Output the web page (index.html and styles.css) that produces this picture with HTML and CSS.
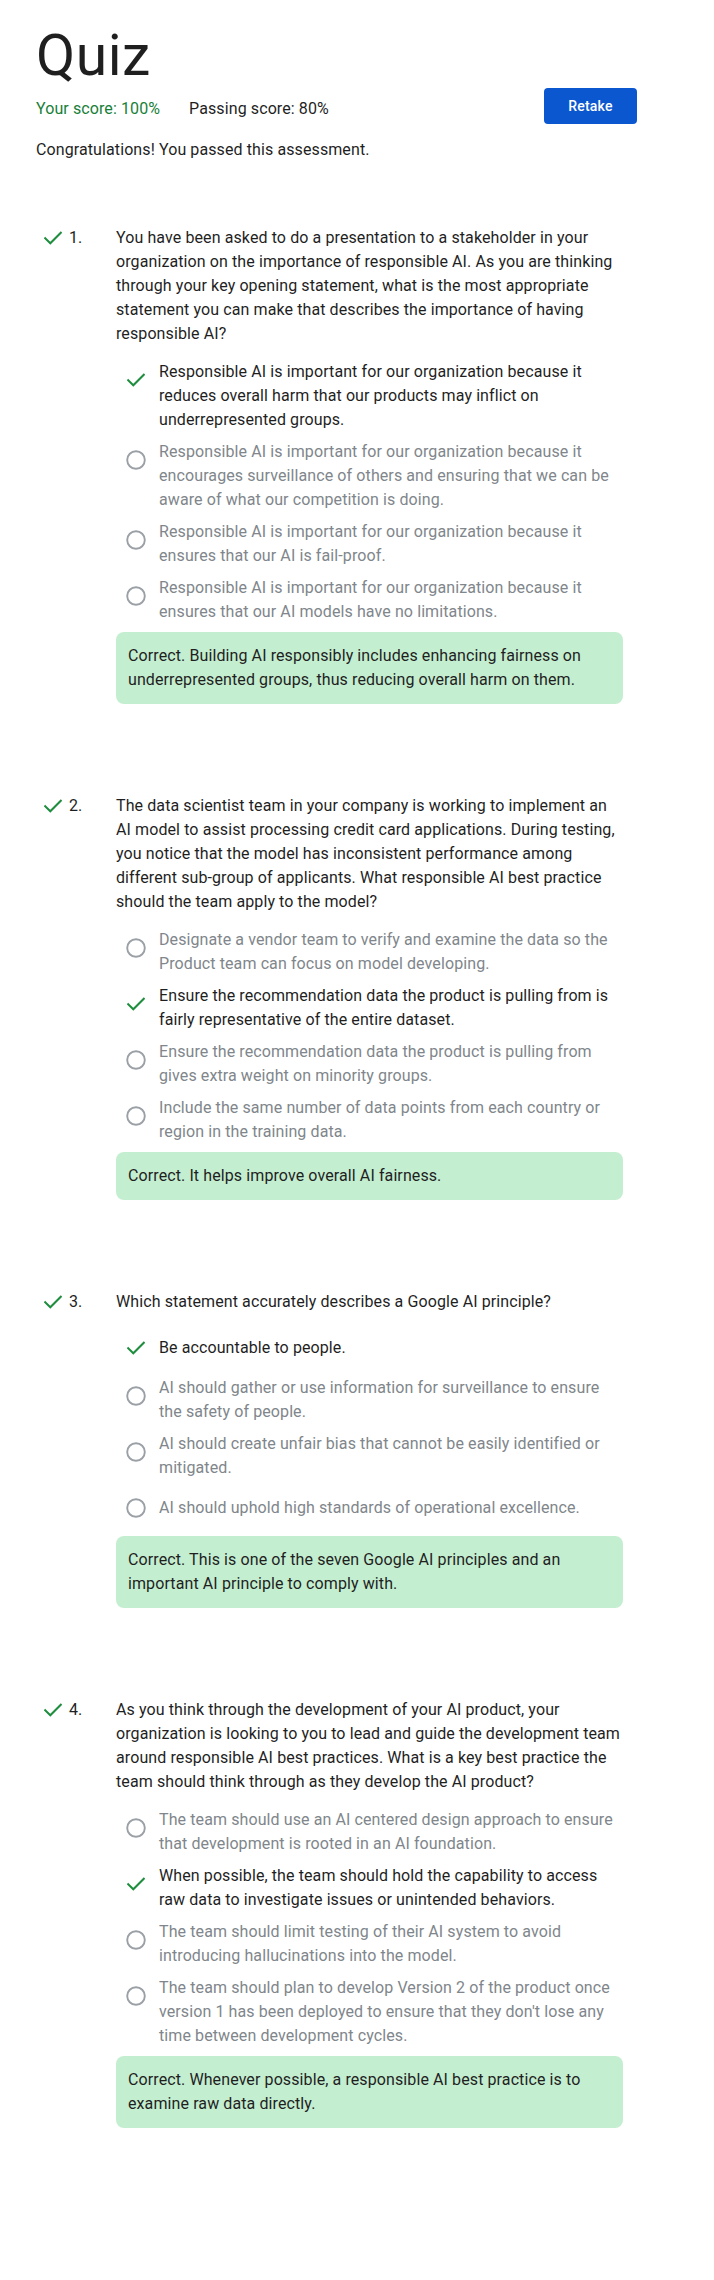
FILE: index.html
```html
<!DOCTYPE html>
<html lang="en">
<head>
<meta charset="utf-8">
<title>Quiz</title>
<link rel="stylesheet" href="styles.css">
</head>
<body>
<main class="page">
  <h1 class="title">Quiz</h1>
  <div class="score-row">
    <span class="score-yours">Your score: 100%</span>
    <span class="score-pass">Passing score: 80%</span>
    <button class="btn-retake" type="button">Retake</button>
  </div>
  <p class="congrats">Congratulations! You passed this assessment.</p>

  <section class="q">
    <div class="q-marker">
      <svg class="q-check" viewBox="0 0 18 14" width="18" height="14"><polyline points="1.2,7.2 6.3,12.3 16.8,1.7"/></svg>
      <span class="q-num">1.</span>
    </div>
    <div class="q-body">
      <p class="q-text">You have been asked to do a presentation to a stakeholder in your organization on the importance of responsible AI. As you are thinking through your key opening statement, what is the most appropriate statement you can make that describes the importance of having responsible AI?</p>
      <ul class="opts">
        <li class="opt opt-correct"><span class="opt-icon"><svg viewBox="0 0 18 14" width="18" height="14"><polyline points="1.2,7.2 6.3,12.3 16.8,1.7"/></svg></span><span class="opt-text">Responsible AI is important for our organization because it reduces overall harm that our products may inflict on underrepresented groups.</span></li>
        <li class="opt"><span class="opt-icon"><svg viewBox="0 0 20 20" width="20" height="20"><circle cx="10" cy="10" r="8.8"/></svg></span><span class="opt-text">Responsible AI is important for our organization because it encourages surveillance of others and ensuring that we can be aware of what our competition is doing.</span></li>
        <li class="opt"><span class="opt-icon"><svg viewBox="0 0 20 20" width="20" height="20"><circle cx="10" cy="10" r="8.8"/></svg></span><span class="opt-text">Responsible AI is important for our organization because it ensures that our AI is fail-proof.</span></li>
        <li class="opt"><span class="opt-icon"><svg viewBox="0 0 20 20" width="20" height="20"><circle cx="10" cy="10" r="8.8"/></svg></span><span class="opt-text">Responsible AI is important for our organization because it ensures that our AI models have no limitations.</span></li>
      </ul>
      <div class="feedback">Correct. Building AI responsibly includes enhancing fairness on underrepresented groups, thus reducing overall harm on them.</div>
    </div>
  </section>

  <section class="q">
    <div class="q-marker">
      <svg class="q-check" viewBox="0 0 18 14" width="18" height="14"><polyline points="1.2,7.2 6.3,12.3 16.8,1.7"/></svg>
      <span class="q-num">2.</span>
    </div>
    <div class="q-body">
      <p class="q-text">The data scientist team in your company is working to implement an AI model to assist processing credit card applications. During testing, you notice that the model has inconsistent performance among different sub-group of applicants. What responsible AI best practice should the team apply to the model?</p>
      <ul class="opts">
        <li class="opt"><span class="opt-icon"><svg viewBox="0 0 20 20" width="20" height="20"><circle cx="10" cy="10" r="8.8"/></svg></span><span class="opt-text">Designate a vendor team to verify and examine the data so the Product team can focus on model developing.</span></li>
        <li class="opt opt-correct"><span class="opt-icon"><svg viewBox="0 0 18 14" width="18" height="14"><polyline points="1.2,7.2 6.3,12.3 16.8,1.7"/></svg></span><span class="opt-text">Ensure the recommendation data the product is pulling from is fairly representative of the entire dataset.</span></li>
        <li class="opt"><span class="opt-icon"><svg viewBox="0 0 20 20" width="20" height="20"><circle cx="10" cy="10" r="8.8"/></svg></span><span class="opt-text">Ensure the recommendation data the product is pulling from gives extra weight on minority groups.</span></li>
        <li class="opt"><span class="opt-icon"><svg viewBox="0 0 20 20" width="20" height="20"><circle cx="10" cy="10" r="8.8"/></svg></span><span class="opt-text">Include the same number of data points from each country or region in the training data.</span></li>
      </ul>
      <div class="feedback">Correct. It helps improve overall AI fairness.</div>
    </div>
  </section>

  <section class="q">
    <div class="q-marker">
      <svg class="q-check" viewBox="0 0 18 14" width="18" height="14"><polyline points="1.2,7.2 6.3,12.3 16.8,1.7"/></svg>
      <span class="q-num">3.</span>
    </div>
    <div class="q-body">
      <p class="q-text">Which statement accurately describes a Google AI principle?</p>
      <ul class="opts">
        <li class="opt opt-correct"><span class="opt-icon"><svg viewBox="0 0 18 14" width="18" height="14"><polyline points="1.2,7.2 6.3,12.3 16.8,1.7"/></svg></span><span class="opt-text">Be accountable to people.</span></li>
        <li class="opt"><span class="opt-icon"><svg viewBox="0 0 20 20" width="20" height="20"><circle cx="10" cy="10" r="8.8"/></svg></span><span class="opt-text">AI should gather or use information for surveillance to ensure the safety of people.</span></li>
        <li class="opt"><span class="opt-icon"><svg viewBox="0 0 20 20" width="20" height="20"><circle cx="10" cy="10" r="8.8"/></svg></span><span class="opt-text">AI should create unfair bias that cannot be easily identified or mitigated.</span></li>
        <li class="opt"><span class="opt-icon"><svg viewBox="0 0 20 20" width="20" height="20"><circle cx="10" cy="10" r="8.8"/></svg></span><span class="opt-text">AI should uphold high standards of operational excellence.</span></li>
      </ul>
      <div class="feedback">Correct. This is one of the seven Google AI principles and an important AI principle to comply with.</div>
    </div>
  </section>

  <section class="q">
    <div class="q-marker">
      <svg class="q-check" viewBox="0 0 18 14" width="18" height="14"><polyline points="1.2,7.2 6.3,12.3 16.8,1.7"/></svg>
      <span class="q-num">4.</span>
    </div>
    <div class="q-body">
      <p class="q-text">As you think through the development of your AI product, your organization is looking to you to lead and guide the development team around responsible AI best practices. What is a key best practice the team should think through as they develop the AI product?</p>
      <ul class="opts">
        <li class="opt"><span class="opt-icon"><svg viewBox="0 0 20 20" width="20" height="20"><circle cx="10" cy="10" r="8.8"/></svg></span><span class="opt-text">The team should use an AI centered design approach to ensure that development is rooted in an AI foundation.</span></li>
        <li class="opt opt-correct"><span class="opt-icon"><svg viewBox="0 0 18 14" width="18" height="14"><polyline points="1.2,7.2 6.3,12.3 16.8,1.7"/></svg></span><span class="opt-text">When possible, the team should hold the capability to access raw data to investigate issues or unintended behaviors.</span></li>
        <li class="opt"><span class="opt-icon"><svg viewBox="0 0 20 20" width="20" height="20"><circle cx="10" cy="10" r="8.8"/></svg></span><span class="opt-text">The team should limit testing of their AI system to avoid introducing hallucinations into the model.</span></li>
        <li class="opt"><span class="opt-icon"><svg viewBox="0 0 20 20" width="20" height="20"><circle cx="10" cy="10" r="8.8"/></svg></span><span class="opt-text">The team should plan to develop Version 2 of the product once version 1 has been deployed to ensure that they don't lose any time between development cycles.</span></li>
      </ul>
      <div class="feedback">Correct. Whenever possible, a responsible AI best practice is to examine raw data directly.</div>
    </div>
  </section>
</main>
</body>
</html>
```

FILE: styles.css
```css
html, body {
  margin: 0;
  padding: 0;
  background: #ffffff;
}

body {
  font-family: Roboto, "Noto Sans", "Liberation Sans", sans-serif;
  font-size: 16px;
  line-height: 24px;
  letter-spacing: 0.1px;
  color: #1f1f1f;
}

.page {
  padding: 24px 77px 154px 36px;
}

.title {
  margin: 0;
  font-size: 57px;
  line-height: 64px;
  font-weight: 400;
  letter-spacing: 0.5px;
  color: #1f1f1f;
}

.score-row {
  display: flex;
  align-items: flex-start;
  height: 36px;
}

.score-yours {
  margin-top: 9px;
  color: #188038;
}

.score-pass {
  margin-top: 9px;
  margin-left: 29px;
  color: #1f1f1f;
}

.btn-retake {
  margin-left: auto;
  width: 93px;
  height: 36px;
  border: none;
  border-radius: 4px;
  background: #0b57d0;
  color: #ffffff;
  font-family: Roboto, "Noto Sans", sans-serif;
  font-size: 14px;
  font-weight: 500;
  letter-spacing: 0.2px;
  padding: 0;
}

.congrats {
  margin: 14px 0 0;
}

.q {
  display: grid;
  grid-template-columns: 80px 507px;
  margin-top: 90px;
}

.congrats + .q {
  margin-top: 64px;
}

.q-marker {
  display: flex;
  align-items: center;
  height: 24px;
  padding-left: 8px;
}

.q-check polyline,
.opt-correct .opt-icon polyline {
  fill: none;
  stroke: #1e8e3e;
  stroke-width: 2;
  stroke-linecap: square;
}

.q-num {
  margin-left: 7px;
  color: #1f1f1f;
}

.q-text {
  margin: 0;
}

.opts {
  list-style: none;
  margin: 14px 0 0;
  padding: 0;
  display: flex;
  flex-direction: column;
  gap: 8px;
}

.opt {
  display: flex;
  align-items: flex-start;
}

.opt-icon {
  flex: none;
  width: 40px;
  height: 40px;
  margin-right: 3px;
  display: flex;
  align-items: center;
  justify-content: center;
}

.opt-icon circle {
  fill: none;
  stroke: #9aa0a6;
  stroke-width: 1.9;
}

.opt-text {
  min-height: 40px;
  display: flex;
  align-items: center;
  color: #80868b;
}

.opt-correct .opt-text {
  color: #1f1f1f;
}

.feedback {
  margin-top: 8px;
  padding: 12px 12px;
  background: #c4eed0;
  border-radius: 8px;
  color: #1f1f1f;
}
```
